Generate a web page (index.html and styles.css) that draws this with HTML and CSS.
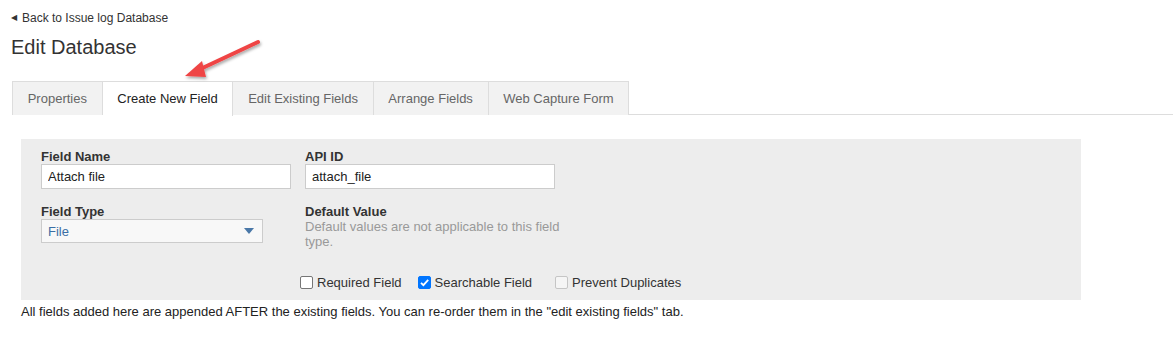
FILE: index.html
```html
<!DOCTYPE html>
<html lang="en">
<head>
    <meta charset="UTF-8">
    <title>Edit Database</title>
    <link rel="stylesheet" href="styles.css">
</head>
<body>
    <div class="page">
        <a class="back" href="#"><span class="caret">&#9664;</span>Back to Issue log Database</a>
        <h1>Edit Database</h1>

        <ul class="tabs">
            <li class="tab">Properties</li>
            <li class="tab active">Create New Field</li>
            <li class="tab">Edit Existing Fields</li>
            <li class="tab">Arrange Fields</li>
            <li class="tab">Web Capture Form</li>
        </ul>

        <div class="panel">
            <div class="row">
                <div class="col">
                    <label for="fieldName">Field Name</label>
                    <input type="text" id="fieldName" value="Attach file">
                </div>
                <div class="col">
                    <label for="apiId">API ID</label>
                    <input type="text" id="apiId" value="attach_file">
                </div>
            </div>
            <div class="row">
                <div class="col">
                    <label>Field Type</label>
                    <div class="select">
                        <span>File</span>
                        <span class="select-caret"></span>
                    </div>
                </div>
                <div class="col wide">
                    <label>Default Value</label>
                    <p class="hint">Default values are not applicable to this field type.</p>
                </div>
            </div>
            <div class="checks">
                <label class="check required"><span class="box"></span>Required Field</label>
                <label class="check searchable"><span class="box checked">
                    <svg viewBox="0 0 13 13" width="13" height="13"><path d="M3 6.8 L5.4 9.2 L10.2 3.8" fill="none" stroke="#fff" stroke-width="1.8"/></svg>
                </span>Searchable Field</label>
                <label class="check disabled"><span class="box"></span>Prevent Duplicates</label>
            </div>
        </div>

        <p class="note">All fields added here are appended AFTER the existing fields. You can re-order them in the "edit existing fields" tab.</p>
    </div>

    <svg class="arrow" width="90" height="50" viewBox="0 0 90 50">
        <defs>
            <filter id="shadow" x="-20%" y="-20%" width="140%" height="160%">
                <feDropShadow dx="1" dy="2" stdDeviation="1.5" flood-color="#000" flood-opacity="0.35"/>
            </filter>
        </defs>
        <g filter="url(#shadow)">
            <line x1="82" y1="6" x2="18" y2="36" stroke="#ef4444" stroke-width="4" stroke-linecap="round"/>
            <polygon points="9,40 26,25 30,41" fill="#ef4444"/>
        </g>
    </svg>
</body>
</html>
```

FILE: styles.css
```css
* {
    margin: 0;
    padding: 0;
    box-sizing: border-box;
}
body {
    font-family: 'Liberation Sans', Arial, sans-serif;
    color: #333;
    background-color: white;
}
.page {
    padding: 11px 0 0 12px;
    position: relative;
}
.back {
    display: block;
    font-size: 12px;
    line-height: 14px;
    color: #333;
    text-decoration: none;
}
.caret {
    font-size: 8px;
    vertical-align: 2px;
    margin: 0 5px 0 -1px;
}
h1 {
    font-size: 20px;
    font-weight: normal;
    line-height: 24px;
    margin: 10px 0 0 -1px;
}
.tabs {
    list-style: none;
    display: flex;
    margin-top: 22px;
    border-bottom: 1px solid #ddd;
    height: 34px;
}
.tab {
    height: 34px;
    padding: 0 14.7px;
    font-size: 13px;
    line-height: 33px;
    color: #666;
    background-color: #f2f2f2;
    border: 1px solid #ddd;
    border-left: none;
    border-bottom: none;
}
.tab:first-child {
    border-left: 1px solid #ddd;
}
.tab.active {
    background-color: white;
    color: #222;
    height: 35px;
}
.panel {
    margin: 24px 0 0 9px;
    width: 1060px;
    height: 161px;
    background-color: #ededed;
    padding: 10px 20px 0;
}
.row {
    display: flex;
    gap: 14px;
    margin-bottom: 15px;
}
.col {
    width: 250px;
}
.col.wide {
    width: 270px;
}
label {
    display: block;
    font-size: 13px;
    font-weight: bold;
    line-height: 15px;
    color: #333;
}
input {
    display: block;
    width: 250px;
    height: 25px;
    padding: 0 6px;
    border: 1px solid #ccc;
    font-family: inherit;
    font-size: 13px;
    color: #222;
    background-color: white;
}
.select {
    display: flex;
    justify-content: space-between;
    align-items: center;
    width: 222px;
    height: 24px;
    padding: 0 6px;
    border: 1px solid #ccc;
    background-color: #f8f8f8;
    font-size: 13px;
    color: #3a6ea5;
}
.select-caret {
    width: 0;
    height: 0;
    border-left: 5px solid transparent;
    border-right: 5px solid transparent;
    border-top: 6px solid #4a78a8;
    margin-right: 2px;
}
.hint {
    font-size: 13px;
    line-height: 15px;
    color: #999;
}
.checks {
    display: flex;
    margin: 26px 0 0 259px;
}
.check {
    display: flex;
    align-items: center;
    font-weight: normal;
    font-size: 13px;
    color: #333;
}
.check.required {
    margin-right: 16px;
}
.check.searchable {
    margin-right: 23px;
}
.box {
    display: inline-block;
    width: 13px;
    height: 13px;
    border: 1px solid #767676;
    border-radius: 2px;
    background-color: white;
    margin-right: 4px;
}
.box.checked {
    background-color: #0075ff;
    border-color: #0075ff;
}
.box svg {
    display: block;
    margin: -1px 0 0 -1px;
}
.check.disabled .box {
    border-color: #c5c5c5;
    background-color: #f5f5f5;
}
.note {
    font-size: 13px;
    line-height: 15px;
    margin: 4px 0 0 9px;
    color: #222;
}
.arrow {
    position: absolute;
    left: 176px;
    top: 36px;
}
```
